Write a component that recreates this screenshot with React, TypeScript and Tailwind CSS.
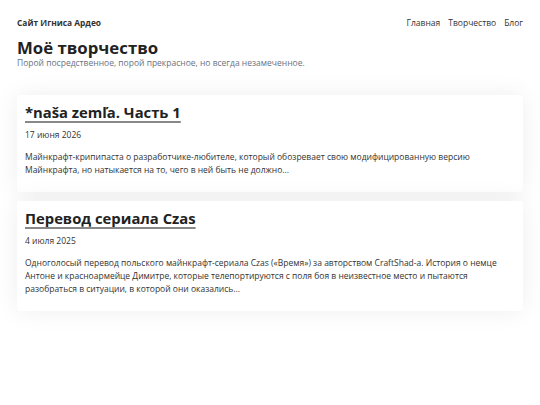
import React from "react";

const posts = [
  {
    title: "*naša zemľa. Часть 1",
    date: "17 июня 2026",
    text: "Майнкрафт-крипипаста о разработчике-любителе, который обозревает свою модифицированную версию Майнкрафта, но натыкается на то, чего в ней быть не должно...",
  },
  {
    title: "Перевод сериала Czas",
    date: "4 июля 2025",
    text: "Одноголосый перевод польского майнкрафт-сериала Czas («Время») за авторством CraftShad-а. История о немце Антоне и красноармейце Димитре, которые телепортируются с поля боя в неизвестное место и пытаются разобраться в ситуации, в которой они оказались...",
  },
];

export default function App() {
  return (
    <div className="min-h-[405px] bg-white text-[#333] font-['Open_Sans',sans-serif]">
      <header className="flex items-center justify-between px-[17px] pt-[16px] h-[30px]">
        <div className="text-[8.4px] font-bold text-[#333]">Сайт Игниса Ардео</div>
        <nav className="flex gap-[8px] text-[8.5px] text-[#333]">
          <a>Главная</a>
          <a>Творчество</a>
          <a>Блог</a>
        </nav>
      </header>
      <main className="px-[17px]">
        <h1 className="mt-[8px] text-[16.8px] font-bold leading-[20px] text-[#222]">Моё творчество</h1>
        <p className="text-[8.5px] leading-[10px] text-[#6b7280]">
          Порой посредственное, порой прекрасное, но всегда незамеченное.
        </p>
        <div className="mt-[27px] flex flex-col gap-[9px]">
          {posts.map((p) => (
            <article
              key={p.title}
              className="rounded-[3px] bg-white px-[8px] pt-[9px] pb-[16px] shadow-[0_0_24px_rgba(0,0,0,0.07)]"
            >
              <h2 className="text-[14.8px] font-bold leading-[16px] text-[#222] underline decoration-[#888] decoration-[2px] underline-offset-[3px] [text-decoration-skip-ink:none]">
                {p.title}
              </h2>
              <div className="mt-[9px] text-[8.5px] leading-[12px] text-[#333]">{p.date}</div>
              <p className="mt-[9px] text-[8.5px] leading-[13px] text-[#333]">{p.text}</p>
            </article>
          ))}
        </div>
      </main>
    </div>
  );
}
